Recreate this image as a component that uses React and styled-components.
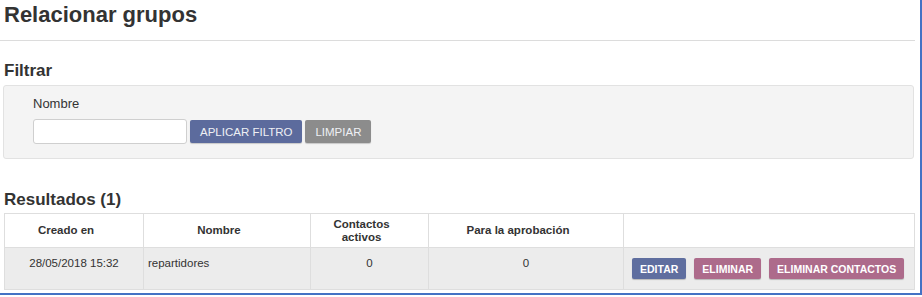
import React from "react";
import styled, { createGlobalStyle } from "styled-components";

const Global = createGlobalStyle`
  html, body { margin: 0; padding: 0; background: #fff; }
  body { font-family: "Liberation Sans", Arial, sans-serif; color: #333; }
  * { box-sizing: border-box; }
`;

const Frame = styled.div`
  width: 922px;
  height: 295px;
  border-right: 2px solid #4472c4;
  border-bottom: 2px solid #4472c4;
`;

const Content = styled.div`
  width: 912px;
  margin-left: 3px;
  padding-top: 2px;
`;

const Title = styled.h1`
  margin: 0 0 0 1px;
  font-size: 22px;
  line-height: 26px;
  font-weight: bold;
  color: #333;
`;

const Rule = styled.hr`
  margin: 12px 0 0 -3px;
  width: 915px;
  border: 0;
  border-top: 1px solid #dcdcdc;
  height: 0;
`;

const Heading = styled.h2`
  margin: ${(p) => p.$top}px 0 0 1px;
  font-size: 17px;
  line-height: 20px;
  font-weight: bold;
  color: #333;
`;

const FilterPanel = styled.div`
  margin-top: 4px;
  width: 911px;
  height: 74px;
  background: #f4f4f4;
  border: 1px solid #e2e2e2;
  border-radius: 3px;
  padding: 10px 0 0 29px;
`;

const Label = styled.div`
  font-size: 13px;
  line-height: 15px;
  color: #333;
`;

const FormRow = styled.div`
  display: flex;
  align-items: center;
  gap: 3px;
  margin-top: 8px;
`;

const TextInput = styled.input`
  width: 154px;
  height: 25px;
  border: 1px solid #cfcfcf;
  border-radius: 3px;
  background: #fff;
  padding: 0 6px;
  font-family: inherit;
`;

const FilterButton = styled.button`
  height: 23px;
  padding: 0 10px;
  border: 0;
  border-radius: 2px;
  background: ${(p) => p.$bg};
  color: #eef0f4;
  font-family: "Liberation Sans", Arial, sans-serif;
  font-size: 11.5px;
  box-shadow: 0 1px 1px rgba(0, 0, 0, 0.18);
  cursor: pointer;
`;

const Table = styled.div`
  margin: 3px 0 0 1px;
  width: 911px;
  display: grid;
  grid-template-columns: 139px 167px 118px 195px 291px;
  border-top: 1px solid #dedede;
  border-left: 1px solid #dedede;
  font-size: 11.5px;
`;

const HeadCell = styled.div`
  height: 34px;
  background: #fff;
  border-right: 1px solid #dedede;
  border-bottom: 1px solid #dedede;
  display: flex;
  align-items: center;
  justify-content: center;
  text-align: center;
  font-weight: bold;
  line-height: 13px;
  color: #333;
  padding: 0 22px 0 6px;
`;

const Cell = styled.div`
  height: 42px;
  background: #ececec;
  border-right: 1px solid #dedede;
  border-bottom: 1px solid #dedede;
  display: flex;
  align-items: ${(p) => (p.$actions ? "center" : "flex-start")};
  justify-content: ${(p) => (p.$left || p.$actions ? "flex-start" : "center")};
  padding: ${(p) => (p.$actions ? "0 0 0 8px" : "8px 4px 0")};
  line-height: 15px;
  color: #333;
  gap: 8px;
`;

const ActionButton = styled.button`
  height: 21px;
  padding: 0 8px;
  border: 0;
  border-radius: 2px;
  background: ${(p) => p.$bg};
  color: #fff;
  font-family: "Liberation Sans", Arial, sans-serif;
  font-weight: bold;
  font-size: 10.5px;
  box-shadow: 0 1px 1px rgba(0, 0, 0, 0.22);
  white-space: nowrap;
  cursor: pointer;
`;

export default function App() {
  return (
    <>
      <Global />
      <Frame>
        <Content>
          <Title>Relacionar grupos</Title>
          <Rule />
          <Heading $top={20}>Filtrar</Heading>
          <FilterPanel>
            <Label>Nombre</Label>
            <FormRow>
              <TextInput type="text" />
              <FilterButton $bg="#5c6b9d">APLICAR FILTRO</FilterButton>
              <FilterButton $bg="#8c8c8c">LIMPIAR</FilterButton>
            </FormRow>
          </FilterPanel>
          <Heading $top={31}>Resultados (1)</Heading>
          <Table>
            <HeadCell>Creado en</HeadCell>
            <HeadCell>Nombre</HeadCell>
            <HeadCell>
              Contactos
              <br />
              activos
            </HeadCell>
            <HeadCell>Para la aprobación</HeadCell>
            <HeadCell />
            <Cell>28/05/2018 15:32</Cell>
            <Cell $left>repartidores</Cell>
            <Cell>0</Cell>
            <Cell>0</Cell>
            <Cell $actions>
              <ActionButton $bg="#5f6e9f">EDITAR</ActionButton>
              <ActionButton $bg="#ad6b8b">ELIMINAR</ActionButton>
              <ActionButton $bg="#ad6b8b">ELIMINAR CONTACTOS</ActionButton>
            </Cell>
          </Table>
        </Content>
      </Frame>
    </>
  );
}
